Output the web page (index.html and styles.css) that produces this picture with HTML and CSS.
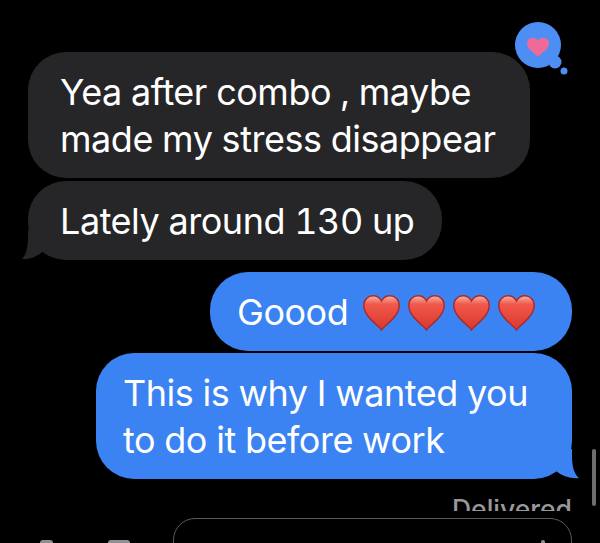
FILE: index.html
```html
<!DOCTYPE HTML>
<html>
<head>
  <meta charset="UTF-8">
  <title>Messages</title>
  <link rel="stylesheet" href="styles.css">
</head>
<body>
  <svg class="defs" width="0" height="0">
    <defs>
      <linearGradient id="heartFill" x1="0" y1="0" x2="0" y2="1">
        <stop offset="0" stop-color="#f9b3a8"/>
        <stop offset=".25" stop-color="#f0584a"/>
        <stop offset="1" stop-color="#d9382c"/>
      </linearGradient>
      <symbol id="heart" viewBox="0 0 37 36">
        <path d="M18.500 35C15 30 .8 21.500 .8 10.500C.8 4.500 5 .8 10 .8C14 .8 17 3 18.500 6C20 3 23 .8 27 .8C32 .8 36.200 4.500 36.200 10.500C36.200 21.500 22 30 18.500 35Z" fill="url(#heartFill)" stroke="#a82a28" stroke-width="1.400"/>
      </symbol>
    </defs>
  </svg>

  <div class="screen">
    <!--top status, mostly scrolled away-->
    <div class="read"><span>Read 2:04 PM</span></div>

    <div class="thread">
      <div class="bubble them first">Yea after combo , maybe<br>made my stress disappear
        <svg class="tapback" width="62" height="62" viewBox="0 0 62 62">
          <circle cx="24" cy="24" r="23" fill="#4d8ef5"/>
          <circle cx="41" cy="41" r="6.500" fill="#4d8ef5"/>
          <circle cx="50" cy="50" r="3.500" fill="#4d8ef5"/>
          <path d="M24 35.500C20 32 13 28 13 22.500C13 19 15.500 16.800 18.500 16.800C21 16.800 23 18 24 20C25 18 27 16.800 29.500 16.800C32.500 16.800 35 19 35 22.500C35 28 28 32 24 35.500Z" fill="#ee6a98"/>
        </svg>
      </div>
      <div class="bubble them second">Lately around 130 up
        <svg class="tail tail-left" width="40" height="30" viewBox="0 0 40 30">
          <path d="M6 0V5C6 15 5 24 0 29C8 30 16 26 21 21L38 10V0Z" fill="#262628"/>
        </svg>
      </div>
      <div class="bubble me third">Goood
        <span class="hearts">
          <svg width="37" height="36"><use href="#heart"/></svg>
          <svg width="37" height="36"><use href="#heart"/></svg>
          <svg width="37" height="36"><use href="#heart"/></svg>
          <svg width="37" height="36"><use href="#heart"/></svg>
        </span>
      </div>
      <div class="bubble me fourth">This is why I wanted you<br>to do it before work
        <svg class="tail tail-right" width="40" height="30" viewBox="0 0 40 30">
          <path d="M32 0V5C32 15 33 24 39 29C31 30 22 27 16 22L2 10V0Z" fill="#3b82f2"/>
        </svg>
      </div>
    </div>

    <div class="delivered"><span>Delivered</span></div>

    <div class="bottom">
      <span class="tool tool-a"></span>
      <span class="tool tool-b"></span>
      <div class="composer"><span class="mic"></span></div>
    </div>

    <div class="scrollbar"></div>
  </div>
</body>
</html>
```

FILE: styles.css
```css
body{margin:0;background:#000;font-family:"Inter","Liberation Sans",sans-serif;}
.defs{position:absolute;}

.screen{
  position:relative;
  width:600px;
  height:543px;
  overflow:hidden;
  background:#000;
}

.read{
  height:4px;
  overflow:hidden;
  padding-right:25px;
  display:flex;
  justify-content:flex-end;
  align-items:flex-end;
  font-size:26px;
  line-height:26px;
  color:#8a8a8e;
  opacity:.6;
}
.read span{display:block;margin-bottom:1px;}

.thread{
  display:flex;
  flex-direction:column;
  padding:48px 28px 0;
}

.bubble{
  position:relative;
  box-sizing:border-box;
  padding:17px 0 15px 32px;
  border-radius:38px;
  font-size:36px;
  font-variant-numeric:tabular-nums;
  line-height:47px;
  letter-spacing:-.47px;
  color:#fff;
  white-space:nowrap;
}
.them{background:#262628;align-self:flex-start;}
.me{background:#3b82f2;align-self:flex-end;}

.first{width:502px;}
.second{width:414px;margin-top:3px;}
.third{
  display:flex;
  align-items:center;
  width:362px;
  margin-top:12px;
  padding-left:27px;
}
.fourth{width:476px;margin-top:2px;padding-left:27px;}

.hearts{display:flex;gap:8px;margin-left:15px;}

.tapback{position:absolute;top:-31px;right:-46px;}
.tail{position:absolute;bottom:0;}
.tail-left{left:-6px;}
.tail-right{right:-8px;}

.delivered{
  height:32px;
  padding-right:28px;
  overflow:hidden;
  display:flex;
  justify-content:flex-end;
  align-items:flex-end;
  font-size:26.500px;
  font-weight:500;
  line-height:26px;
  color:#98989c;
}
.delivered span{display:block;margin-bottom:-11px;}

.bottom{
  display:flex;
  margin-top:7px;
  padding-right:28px;
}
.tool{
  display:block;
  height:4px;
  margin-top:22px;
  background:#8e8e93;
  border-radius:3px 3px 0 0;
}
.tool-a{width:13px;margin-left:40px;}
.tool-b{width:22px;margin-left:55px;}
.composer{
  position:relative;
  box-sizing:border-box;
  width:399px;
  height:60px;
  margin-left:auto;
  border:1px solid #5a5a5e;
  border-radius:22px;
}
.mic{
  position:absolute;
  top:21px;
  right:26px;
  width:4px;
  height:6px;
  background:#8e8e93;
  border-radius:2px;
}

.scrollbar{
  position:absolute;
  top:449px;
  left:592px;
  width:4px;
  height:57px;
  background:#6e6e70;
  border-radius:2px;
}
```
